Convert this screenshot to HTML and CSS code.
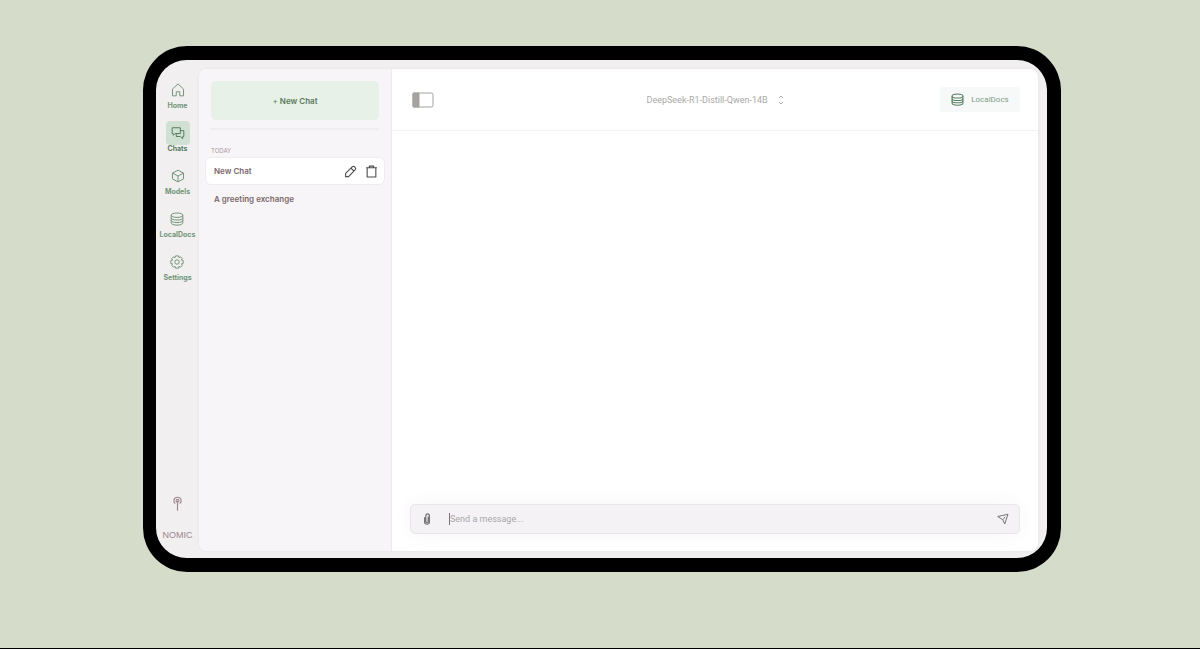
FILE: index.html
```html
<!DOCTYPE html>
<html lang="en">
<head>
    <meta charset="UTF-8">
    <title>New Chat</title>
    <link rel="stylesheet" href="styles.css">
</head>
<body>
    <div class="device">
        <nav class="rail">
            <a class="rail-item" href="#home">
                <span class="rail-icon"><svg viewBox="0 0 24 24"><path d="M2.500 10.500 12 1.500l9.500 9V22H15v-7H9v7H2.500z"/></svg></span>
                Home
            </a>
            <a class="rail-item active" href="#chats">
                <span class="rail-icon"><svg viewBox="0 0 24 24"><path d="M2 3h14v10H7l-3 3v-3H2z"/><path d="M16 8h6v10h-2v4l-4-4H9v-5"/></svg></span>
                Chats
            </a>
            <a class="rail-item" href="#models">
                <span class="rail-icon"><svg viewBox="0 0 24 24"><path d="m12 2 9.500 5v10L12 22l-9.500-5V7z"/><path d="m2.500 7 9.500 5 9.500-5M12 12v10"/></svg></span>
                Models
            </a>
            <a class="rail-item" href="#localdocs">
                <span class="rail-icon"><svg viewBox="0 0 24 24"><ellipse cx="12" cy="5.500" rx="10" ry="3.800"/><path d="M2 5.500v13c0 2.200 4 4 10 4s10-1.800 10-4v-13"/><path d="M2 10c0 2.200 4 3.800 10 3.800s10-1.600 10-3.800M2 14.300c0 2.200 4 3.800 10 3.800s10-1.600 10-3.800"/></svg></span>
                LocalDocs
            </a>
            <a class="rail-item" href="#settings">
                <span class="rail-icon"><svg viewBox="0 0 24 24"><path d="M9.500 1.500h5l.8 3 2.700-1.400L21 6.100l-1.500 2.600 3 .8v5l-3 .8 1.500 2.600-3 3-2.700-1.400-.8 3h-5l-.8-3L6 20.900l-3-3 1.500-2.600-3-.8v-5l3-.8L3 6.100l3-3 2.700 1.400z"/><circle cx="12" cy="12" r="3.800"/></svg></span>
                Settings
            </a>
            <div class="brand">
                <svg class="brand-mark" viewBox="0 0 16 28"><path d="M4 13C0 10 1 2 8 2s8 8 4 11"/><circle cx="8" cy="8" r="2.500"/><path d="M8 8v18"/></svg>
                <span class="brand-name">NOMIC</span>
            </div>
        </nav>

        <div class="window">
            <aside class="sidebar">
                <button class="new-chat" type="button"><span class="plus">+</span> New Chat</button>
                <hr class="divider">
                <h2 class="group">TODAY</h2>
                <ul class="chats">
                    <li class="chat current">
                        <a href="#new">New Chat</a>
                        <button type="button" aria-label="Rename"><svg viewBox="0 0 24 24"><path d="M3 21.500v-6L15.500 3.200q2-1.700 3.800 0l1.500 1.500q1.700 2 0 3.800L8.500 21.500z"/><path d="m13 6 5.500 5.500"/></svg></button>
                        <button type="button" aria-label="Delete"><svg viewBox="0 0 24 24"><path d="M2 5h20M4 5v17h16V5M8 5V2h8v3"/></svg></button>
                    </li>
                    <li class="chat"><a href="#greeting">A greeting exchange</a></li>
                </ul>
            </aside>

            <main class="main">
                <header class="topbar">
                    <button class="toggle" type="button" aria-label="Toggle sidebar">
                        <svg viewBox="0 0 22 16"><rect x="1" y="1" width="20" height="14" rx="1.500"/><path class="fill" d="M1 1h6v14H1z"/></svg>
                    </button>
                    <div class="model">
                        <select aria-label="Model">
                            <option>DeepSeek-R1-Distill-Qwen-14B</option>
                        </select>
                        <svg viewBox="0 0 8 12"><path d="m2 4 2-2 2 2M2 8l2 2 2-2"/></svg>
                    </div>
                    <button class="docs" type="button">
                        <svg viewBox="0 0 24 24"><ellipse cx="12" cy="5.500" rx="10" ry="3.800"/><path d="M2 5.500v13c0 2.200 4 4 10 4s10-1.800 10-4v-13"/><path d="M2 10c0 2.200 4 3.800 10 3.800s10-1.600 10-3.800M2 14.300c0 2.200 4 3.800 10 3.800s10-1.600 10-3.800"/></svg>
                        LocalDocs
                    </button>
                </header>
                <section class="messages"></section>
                <form class="composer">
                    <button type="button" aria-label="Attach">
                        <svg class="clip" viewBox="0 0 12 20"><path d="M2 7v8q0 3.500 4 3.500t4-3.500V5q0-3.500-3-3.500T4 5v9q0 1.500 2 1.500T8 14V6"/></svg>
                    </button>
                    <span class="caret"></span>
                    <input type="text" aria-label="Message" placeholder="Send a message...">
                    <button type="submit" aria-label="Send">
                        <svg class="send" viewBox="0 0 24 24"><path d="M1.500 7 22 2.500 15.500 22l-4-8.500z"/><path d="m11.500 13.500 5-6"/></svg>
                    </button>
                </form>
            </main>
        </div>
    </div>
</body>
</html>
```
FILE: styles.css
```css
*{
    box-sizing: border-box;
    margin: 0;
    padding: 0;
}
body{
    min-height: 100vh;
    padding: 46px 139px 0 143px;
    border-bottom: 1px solid #000;
    background: #d5dcc9;
    font-family: Inter, "Liberation Sans", sans-serif;
    font-size: 8px;
}
a{
    color: inherit;
    text-decoration: none;
}
button{
    border: 0;
    background: none;
    font: inherit;
    color: inherit;
}
svg{
    display: block;
    fill: none;
    stroke: currentColor;
    stroke-width: 2;
    stroke-linejoin: round;
}
.device{
    display: flex;
    aspect-ratio: 918 / 526;
    padding: 9px 9px 7px 0;
    border: 14px solid #000;
    border-left-width: 13px;
    border-radius: 44px;
    background: #f1eff0;
}

/* left rail */
.rail{
    display: flex;
    flex-direction: column;
    align-items: center;
    gap: 10px;
    width: 43px;
    padding-top: 9px;
    font-size: 7px;
    font-weight: 700;
    line-height: 10px;
    color: #729579;
}
.rail-item{
    display: flex;
    flex-direction: column;
    align-items: center;
}
.rail-icon{
    display: grid;
    place-items: center;
    width: 24px;
    height: 24px;
    margin-bottom: -1px;
    border-radius: 4px;
}
.rail-icon svg{
    width: 14px;
    height: 14px;
    stroke-width: 1.7;
}
.active{
    color: #587a60;
}
.active .rail-icon{
    background: #d0e1d4;
}
.brand{
    display: flex;
    flex-direction: column;
    align-items: center;
    gap: 12px;
    margin-top: auto;
    padding-bottom: 5px;
    color: #9d858b;
}
.brand-mark{
    width: 9px;
    height: 16px;
}
.brand-name{
    font-family: "Liberation Sans Narrow", "Liberation Sans", sans-serif;
    font-size: 9px;
    font-weight: 400;
    line-height: 22px;
}

.window{
    display: flex;
    flex: 1;
    overflow: hidden;
    border-radius: 8px;
    background: #fff;
    box-shadow: 0 0 3px #e4e2e3;
}

/* chat list */
.sidebar{
    width: 193px;
    padding: 12px 6px;
    border-right: 1px solid #eeeaec;
    background: #f7f5f7;
    color: #7b686b;
}
.new-chat{
    display: block;
    width: 168px;
    height: 39px;
    margin-left: 6px;
    border-radius: 5px;
    background: #e8f1e8;
    font-weight: 600;
    color: #58795d;
}
.plus{
    font-weight: 400;
}
.divider{
    margin: 8px 6px 16px;
    border: 0;
    border-top: 2px solid #efedee;
}
.group{
    margin: 0 6px 1px;
    font-size: 6px;
    font-weight: 400;
    line-height: 10px;
    color: #a8989c;
}
.chats{
    list-style: none;
}
.chat{
    display: flex;
    align-items: center;
    gap: 8px;
    height: 28px;
    padding: 0 6px 0 8px;
    border: 1px solid transparent;
    border-radius: 6px;
    font-weight: 600;
}
.chat a{
    flex: 1;
}
.chat svg{
    width: 13px;
    height: 13px;
    color: #4c4a4b;
}
.current{
    border-color: #efecee;
    background: #fff;
}

/* conversation */
.main{
    display: flex;
    flex: 1;
    flex-direction: column;
}
.topbar{
    display: grid;
    grid-template-columns: 1fr auto 1fr;
    align-items: center;
    height: 62px;
    padding: 0 18px 0 19px;
    border-bottom: 1px solid #f3f2f3;
}
.toggle{
    justify-self: start;
    color: #a6a2a0;
}
.toggle svg{
    width: 24px;
    height: 16px;
    stroke-width: 1;
}
.toggle .fill{
    fill: currentColor;
}
.model{
    display: flex;
    align-items: center;
    gap: 8px;
    color: #aaa8a8;
}
.model select{
    appearance: none;
    border: 0;
    background: none;
    font: 9px Roboto, sans-serif;
    color: inherit;
}
.model svg{
    width: 8px;
    height: 12px;
    stroke-width: 1;
}
.docs{
    display: flex;
    align-items: center;
    justify-content: center;
    justify-self: end;
    gap: 7px;
    width: 80px;
    height: 25px;
    border-radius: 3px;
    background: #f6f9f7;
    font-family: Roboto, sans-serif;
    color: #7f9d86;
}
.docs svg{
    width: 13px;
    height: 13px;
    color: #5b7f64;
}
.messages{
    flex: 1;
}
.composer{
    display: flex;
    align-items: center;
    height: 30px;
    margin: 0 18px 17px;
    padding: 0 10px 0 11px;
    border: 1px solid #e8e6e7;
    border-radius: 5px;
    background: #f4f2f4;
    box-shadow: 0 0 20px #f3f5f4;
    color: #767478;
}
.composer input{
    flex: 1;
    border: 0;
    outline: 0;
    background: none;
    font: 9px Roboto, sans-serif;
}
.composer input::placeholder{
    color: #aaa7aa;
}
.clip{
    width: 10px;
    height: 12px;
}
.caret{
    width: 1px;
    height: 12px;
    margin-left: 17px;
    background: #77757a;
}
.send{
    width: 12px;
    height: 12px;
}
```
